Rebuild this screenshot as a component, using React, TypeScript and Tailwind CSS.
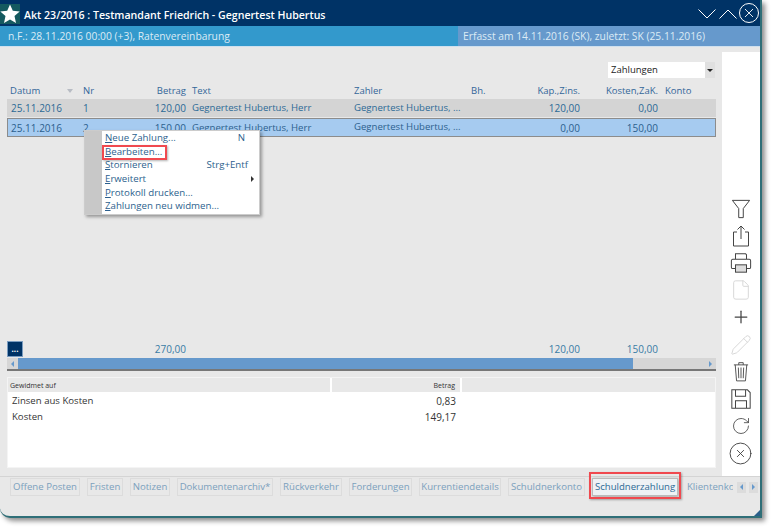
import { File, Pencil, Plus, RotateCw, CircleX } from "lucide-react";
import type { ReactNode } from "react";

const rows = [
  { datum: "25.11.2016", nr: "1", betrag: "120,00", kap: "120,00", kosten: "0,00" },
  { datum: "25.11.2016", nr: "2", betrag: "150,00", kap: "0,00", kosten: "150,00" },
];

const tabs = [
  { label: "Offene Posten", w: "w-[70px]" },
  { label: "Fristen", w: "w-[36px]" },
  { label: "Notizen", w: "w-[40px]" },
  { label: "Dokumentenarchiv*", w: "w-[96px]" },
  { label: "Rückverkehr", w: "w-[62px]" },
  { label: "Forderungen", w: "w-[63px]" },
  { label: "Kurrentiendetails", w: "w-[82px]" },
  { label: "Schuldnerkonto", w: "w-[77px]" },
];

const menu = [
  { label: "Neue Zahlung...", u: "N", rest: "eue Zahlung...", key: "N" },
  { label: "Bearbeiten...", u: "B", rest: "earbeiten..." },
  { label: "Stornieren", u: "S", rest: "tornieren", key: "Strg+Entf" },
  { label: "Erweitert", u: "E", rest: "rweitert", arrow: true },
  { label: "Protokoll drucken...", u: "P", rest: "rotokoll drucken..." },
  { label: "Zahlungen neu widmen...", u: "Z", rest: "ahlungen neu widmen..." },
];

const gridCols = "grid grid-cols-[73px_83px_23px_6px_162px_117px_60px_49px_78px_7px_51px]";

function Cells({ r }: { r: (typeof rows)[number] }) {
  return (
    <>
      <div className="pl-[4px]">{r.datum}</div>
      <div className="pl-[3px]">{r.nr}</div>
      <div className="text-right -ml-[40px]">{r.betrag}</div>
      <div />
      <div className="whitespace-nowrap text-[9.6px]">Gegnertest Hubertus, Herr</div>
      <div className="col-span-2 -mt-[1px] whitespace-nowrap text-[9.6px]">Gegnertest Hubertus, ...</div>
      <div className="text-right -ml-[40px]">{r.kap}</div>
      <div className="text-right">{r.kosten}</div>
      <div />
      <div />
    </>
  );
}

function Tool({ children }: { children: ReactNode }) {
  return <div className="h-[27.2px] w-full flex items-center justify-center pr-[1px]">{children}</div>;
}

export default function App() {
  return (
    <div className="w-[772px] h-[528px] bg-white overflow-hidden font-['Open_Sans',sans-serif] text-[10px] leading-none">
      <div className="relative w-[762px] h-[518px] bg-[#e8e8e8] rounded-bl-[10px] border-r-2 border-b-2 border-[#2f6f78] shadow-[3px_3px_5px_rgba(0,0,0,0.45)] flex flex-col">
        {/* Title bar */}
        <div className="h-[26px] shrink-0 bg-[#003366] flex items-center text-white">
          <div className="w-[20px] h-[20px] mt-[2px] bg-[#14595f] flex items-center justify-center">
            <svg width="20" height="20" viewBox="0 0 20 20">
              <path d="M10 0.5l2.8 6.3 6.9.7-5.2 4.6 1.5 6.8L10 15.4l-6 3.5 1.5-6.8L.3 7.5l6.9-.7z" fill="#fff" />
            </svg>
          </div>
          <div className="ml-[4px] mt-[4px] font-semibold text-[10.6px] whitespace-nowrap">Akt 23/2016 : Testmandant Friedrich - Gegnertest Hubertus</div>
          <div className="ml-auto mr-[1px] flex items-center">
            <svg width="18" height="10" viewBox="0 0 18 10" className="mr-[3px] mt-[2px]">
              <path d="M0.5 0.5L9 9l8.5-8.5" fill="none" stroke="#fff" strokeWidth="1" />
            </svg>
            <svg width="18" height="10" viewBox="0 0 18 10" className="mr-[2px] mt-[2px]">
              <path d="M0.5 9.5L9 1l8.5 8.5" fill="none" stroke="#fff" strokeWidth="1" />
            </svg>
            <div className="w-[20px] h-[20px] rounded-full border border-white flex items-center justify-center">
              <svg width="10" height="10" viewBox="0 0 10 10">
                <path d="M1 1l8 8M9 1l-8 8" fill="none" stroke="#fff" strokeWidth="0.9" />
              </svg>
            </div>
          </div>
        </div>
        {/* Status bar */}
        <div className="h-[21px] shrink-0 flex text-[10.3px] text-[#dcebf5] border-b border-[#cfe0ee]">
          <div className="w-[458px] bg-[#3399cc] flex items-center pl-[8px]">n.F.: 28.11.2016 00:00 (+3), Ratenvereinbarung</div>
          <div className="flex-1 bg-[#6699cc] flex items-center pl-[5px]">Erfasst am 14.11.2016 (SK), zuletzt: SK (25.11.2016)</div>
        </div>

        <div className="flex flex-1 min-h-0">
          {/* Main column */}
          <div className="w-[722px] shrink-0 flex flex-col pl-[7px] pr-[6px] pb-[8px] text-[#336699]">
            <div className="h-[16px] shrink-0 mt-[15px] flex justify-end pr-[1px]">
              <div className="w-[107px] bg-white flex items-center pl-[3px] text-[#222] text-[9.5px]">
                Zahlungen
                <div className="ml-auto w-[10px] h-full bg-[#e0e0e0] flex items-center justify-center">
                  <div className="w-0 h-0 border-x-[3px] border-x-transparent border-t-[3px] border-t-[#222]" />
                </div>
              </div>
            </div>
            {/* Grid header */}
            <div className={`${gridCols} h-[17px] shrink-0 items-center mt-[4px] text-[9.5px]`}>
              <div className="pl-[3px] pr-[7px] flex items-center justify-between">
                Datum
                <div className="w-0 h-0 border-x-[3px] border-x-transparent border-t-[4px] border-t-[#b8bcc4]" />
              </div>
              <div className="pl-[3px]">Nr</div>
              <div className="text-right -ml-[40px]">Betrag</div>
              <div />
              <div>Text</div>
              <div>Zahler</div>
              <div>Bh.</div>
              <div className="text-right -ml-[40px] whitespace-nowrap">Kap.,Zins.</div>
              <div className="text-right whitespace-nowrap">Kosten,ZaK.</div>
              <div />
              <div>Konto</div>
            </div>
            {/* Rows */}
            <div className={`${gridCols} h-[18px] shrink-0 items-center bg-[#d4d4d4] text-[#2c6a96]`}>
              <Cells r={rows[0]} />
            </div>
            <div className={`${gridCols} h-[19px] mt-[1px] shrink-0 items-center bg-[#a6cbf0] shadow-[inset_0_0_0_1px_#8c8c8c] text-[#2c5f8e]`}>
              <Cells r={rows[1]} />
            </div>
            <div className="flex-1" />
            {/* Totals */}
            <div className={`${gridCols} h-[17px] shrink-0 items-center text-[#3a7ca5]`}>
              <div>
                <div className="w-[16px] h-[16px] bg-[#003366] border border-[#7a9cc0] text-white text-[8px] font-bold flex items-center justify-center">...</div>
              </div>
              <div />
              <div className="text-right -ml-[40px]">270,00</div>
              <div /><div /><div /><div />
              <div className="text-right -ml-[40px]">120,00</div>
              <div className="text-right">150,00</div>
              <div /><div />
            </div>
            {/* Scrollbar */}
            <div className="h-[13px] mt-[1px] shrink-0 flex bg-[#d6d6d6] border-b-2 border-[#777]">
              <div className="w-[11px] flex items-center justify-center">
                <div className="w-0 h-0 border-y-[3px] border-y-transparent border-r-[3px] border-r-[#6699cc]" />
              </div>
              <div className="w-[615px] bg-[#6699cc]" />
              <div className="flex-1 flex items-center justify-end pr-[4px]">
                <div className="w-0 h-0 border-y-[3px] border-y-transparent border-l-[3px] border-l-[#6699cc]" />
              </div>
            </div>
            {/* Detail table */}
            <div className="h-[91px] mt-[6px] shrink-0 bg-white border border-[#f4f4f4] text-[#333]">
              <div className="h-[14px] flex text-[7px] text-[#333]">
                <div className="w-[322px] bg-[#e8e8e8] flex items-center pl-[2px]">Gewidmet auf</div>
                <div className="w-[128px] ml-[2px] bg-[#e8e8e8] flex items-center justify-end pr-[5px]">Betrag</div>
                <div className="flex-1 ml-[2px] bg-[#e8e8e8]" />
              </div>
              <div className="w-[448px] mt-[1px] text-[9.6px] leading-[16px]">
                <div className="flex justify-between pl-[4px]"><span>Zinsen aus Kosten</span><span className="text-[10px]">0,83</span></div>
                <div className="flex justify-between pl-[4px]"><span>Kosten</span><span className="text-[10px]">149,17</span></div>
              </div>
            </div>
          </div>
          {/* Right toolbar */}
          <div className="flex-1 mt-[5px] bg-white flex flex-col items-center justify-end pb-[9px] text-[#444]">
            <Tool>
              <svg width="20" height="22" viewBox="0 0 22 22" fill="none" stroke="currentColor" strokeWidth="1.1">
                <path d="M1.5 1.5h19l-7 9v10h-5v-10z" />
              </svg>
            </Tool>
            <Tool>
              <svg width="20" height="24" viewBox="0 0 20 24" fill="none" stroke="currentColor" strokeWidth="1">
                <path d="M6 8H2.5v14h15V8H14M10 15V2M6.5 5.5L10 2l3.5 3.5" />
              </svg>
            </Tool>
            <Tool>
              <svg width="22" height="22" viewBox="0 0 24 24" fill="none" stroke="currentColor" strokeWidth="1.1">
                <path d="M6 8V2h11l1 1v5M6 18H3a1.5 1.5 0 0 1-1.5-1.5v-7A1.5 1.5 0 0 1 3 8h18a1.5 1.5 0 0 1 1.5 1.5v7A1.5 1.5 0 0 1 21 18h-3" />
                <rect x="6" y="14" width="12" height="8" fill="#ddd" />
              </svg>
            </Tool>
            <Tool>
              <File className="w-[22px] h-[24px] text-[#d4d4d4]" strokeWidth={1} />
            </Tool>
            <Tool>
              <Plus className="w-[20px] h-[20px]" strokeWidth={1.5} />
            </Tool>
            <Tool>
              <Pencil className="w-[22px] h-[24px] text-[#d4d4d4]" strokeWidth={1} />
            </Tool>
            <Tool>
              <svg width="16" height="22" viewBox="0 0 18 24" fill="none" stroke="currentColor" strokeWidth="1">
                <path d="M1 4h16M6.5 4V1.5h5V4M2.5 4l1.5 18h10l1.5-18M6 7l.5 12M9 7v12M12 7l-.5 12" />
              </svg>
            </Tool>
            <Tool>
              <svg width="22" height="22" viewBox="0 0 24 24" fill="none" stroke="currentColor" strokeWidth="1.1">
                <path d="M2 2h17l3 3v17H2zM6 2v7h11V2M6 22v-8h12v8" />
              </svg>
            </Tool>
            <Tool>
              <RotateCw className="w-[20px] h-[20px]" strokeWidth={1} />
            </Tool>
            <Tool>
              <CircleX className="w-[25px] h-[25px]" strokeWidth={0.9} />
            </Tool>
          </div>
        </div>

        {/* Tabs */}
        <div className="h-[40px] shrink-0 border-t border-[#d4d4d4] flex items-start pl-[10px] pt-[1px] text-[9.6px] text-[#7ba0bd] relative">
          <div className="flex gap-[7px] h-[18px]">
            {tabs.map((t) => (
              <div key={t.label} className={`${t.w} h-full border border-[#dcdcdc] flex items-center justify-center whitespace-nowrap`}>
                {t.label}
              </div>
            ))}
            <div className="w-[86px] h-full border border-[#bbb] bg-[#eef2f5] flex items-center justify-center whitespace-nowrap text-[#2c6a96] shadow-[1px_1px_3px_rgba(0,0,0,0.3)]">
              Schuldnerzahlung
            </div>
            <div className="w-[46px] overflow-hidden h-full flex items-center ml-[2px] whitespace-nowrap">Klientenkonto</div>
          </div>
          <div className="flex items-center h-[18px] ml-[4px] gap-[3px]">
            <div className="w-[9px] h-[11px] bg-[#dcdcdc] flex items-center justify-center">
              <div className="w-0 h-0 border-y-[3px] border-y-transparent border-r-[3px] border-r-[#6699cc]" />
            </div>
            <div className="w-[9px] h-[11px] bg-[#dcdcdc] flex items-center justify-center">
              <div className="w-0 h-0 border-y-[3px] border-y-transparent border-l-[3px] border-l-[#6699cc]" />
            </div>
          </div>
          {/* Red highlight over active tab */}
          <div className="absolute left-[589px] top-[-5px] w-[92px] h-[27px] border-2 border-[#f0494f] shadow-[1px_1px_2px_rgba(0,0,0,0.3)]" />
          {/* Resize grip */}
          <div className="absolute right-0 bottom-0 w-0 h-0 border-l-[6px] border-l-transparent border-b-[6px] border-b-[#2a5f8a]" />
        </div>

        {/* Context menu */}
        <div className="absolute left-[84px] top-[130px] w-[176px] h-[85px] bg-white border border-[#ccc] shadow-[2px_2px_3px_rgba(0,0,0,0.35)] flex text-[#2c5f8e] text-[9.7px]">
          <div className="w-[17px] bg-[#c8c8c8] shrink-0" />
          <div className="flex-1">
            {menu.map((m) => (
              <div key={m.label} className="h-[13.7px] flex items-center pl-[3px] pr-[2px]">
                <span className="whitespace-nowrap"><span className="underline">{m.u}</span>{m.rest}</span>
                {m.key && <span className={m.key === "N" ? "ml-auto mr-[12px]" : "ml-auto mr-[9px]"}>{m.key}</span>}
                {m.arrow && <div className="ml-auto mr-[3px] w-0 h-0 border-y-[3px] border-y-transparent border-l-[3px] border-l-[#333]" />}
              </div>
            ))}
          </div>
          <div className="absolute left-[17px] top-[14px] w-[65px] h-[15px] border-2 border-[#f0494f] shadow-[1px_1px_2px_rgba(0,0,0,0.3)]" />
        </div>
      </div>
    </div>
  );
}
